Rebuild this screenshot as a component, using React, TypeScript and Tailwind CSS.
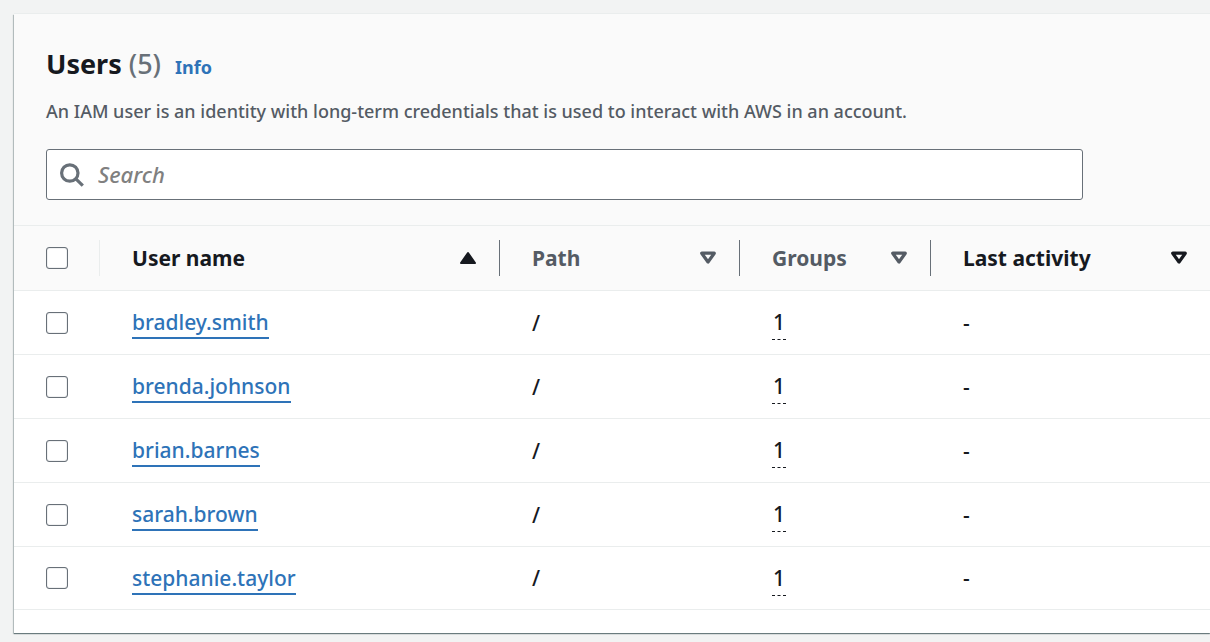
import { useState } from "react";

const users = [
  "bradley.smith",
  "brenda.johnson",
  "brian.barnes",
  "sarah.brown",
  "stephanie.taylor",
];

function SearchIcon() {
  return (
    <svg
      viewBox="0 0 24 24"
      className="size-6 shrink-0 text-[#687078]"
      fill="none"
      stroke="currentColor"
      strokeWidth="3.2"
      aria-hidden="true"
    >
      <circle cx="9.8" cy="10" r="8.2" />
      <path d="M15.6 15.6l7.2 7" />
    </svg>
  );
}

function SortIcon({ ascending = false }: { ascending?: boolean }) {
  return (
    <svg
      viewBox="0 0 18 14"
      className="h-3.5 w-[18px] shrink-0"
      fill={ascending ? "currentColor" : "none"}
      stroke="currentColor"
      strokeWidth={ascending ? 2 : 3.2}
      strokeLinejoin="round"
      aria-hidden="true"
    >
      {ascending ? <path d="M9 2l7 10H2z" /> : <path d="M2.7 2.2h12.6L9 11z" />}
    </svg>
  );
}

function HeaderCell({
  label,
  width,
  tone,
  ascending,
  last,
}: {
  label: string;
  width: string;
  tone: string;
  ascending?: boolean;
  last?: boolean;
}) {
  return (
    <th
      scope="col"
      aria-sort={ascending ? "ascending" : "none"}
      className={`border-y border-[#eaeded] p-0 ${width}`}
    >
      <button
        type="button"
        className={`flex h-9 w-full items-center justify-between pr-[22px] pl-8 text-left font-bold ${tone} ${
          last ? "" : "border-r border-[#687078]"
        }`}
      >
        {label}
        <SortIcon ascending={ascending} />
      </button>
    </th>
  );
}

function Checkbox({
  label,
  checked,
  onChange,
}: {
  label: string;
  checked: boolean;
  onChange: () => void;
}) {
  return (
    <input
      type="checkbox"
      aria-label={label}
      checked={checked}
      onChange={onChange}
      className="block size-[22px] appearance-none rounded-[3px] border border-[#687078] bg-white shadow-[inset_0_0_1px_#687078] checked:bg-[#0073bb]"
    />
  );
}

export default function App() {
  const [selected, setSelected] = useState<string[]>([]);
  const allSelected = selected.length === users.length;
  const toggle = (name: string) =>
    setSelected((current) =>
      current.includes(name) ? current.filter((n) => n !== name) : [...current, name],
    );

  return (
    <main className="min-h-screen bg-[#f2f3f3] pt-3.5 pb-2 pl-3.5 font-['Noto_Sans',sans-serif] font-medium text-[#16191f]">
      <section className="bg-white pb-[23px] shadow-[0_-1px_0_#eaeded,0_1px_1px_rgba(0,28,36,0.45),-1px_1px_1px_rgba(0,28,36,0.2)]">
        <header className="bg-[#fafafa] px-8 pt-8 pb-[25px]">
          <div className="flex items-baseline">
            <h1 className="text-[27px] leading-9 font-bold">
              Users <span className="font-medium text-[#687078]">(5)</span>
            </h1>
            <a href="#info" className="ml-3.5 text-[18px] font-bold text-[#2e73b8]">
              Info
            </a>
          </div>
          <p className="mt-[15px] text-[18px] leading-7 text-[#545b64]">
            An IAM user is an identity with long-term credentials that is used to interact with
            AWS in an account.
          </p>
          <label className="mt-6 mr-[95px] flex h-[51px] items-center gap-3.5 rounded-[3px] border border-[#687078] bg-white px-[13px]">
            <SearchIcon />
            <input
              type="search"
              placeholder="Search"
              aria-label="Search"
              className="min-w-0 flex-1 bg-transparent text-[22px] outline-none placeholder:text-[#808080] placeholder:italic"
            />
          </label>
        </header>
        <table className="w-full table-fixed border-separate border-spacing-0 text-[21px] leading-8">
          <thead className="bg-[#fafafa]">
            <tr className="h-[66px]">
              <th scope="col" className="w-[86px] border-y border-[#eaeded] p-0">
                <div className="flex h-9 items-center border-r border-[#eaeded] pl-8">
                  <Checkbox
                    label="Select all users"
                    checked={allSelected}
                    onChange={() => setSelected(allSelected ? [] : users)}
                  />
                </div>
              </th>
              <HeaderCell label="User name" width="w-[400px]" tone="text-[#16191f]" ascending />
              <HeaderCell label="Path" width="w-[240px]" tone="text-[#545b64]" />
              <HeaderCell label="Groups" width="w-[191px]" tone="text-[#545b64]" />
              <HeaderCell label="Last activity" width="" tone="text-[#16191f]" last />
            </tr>
          </thead>
          <tbody className="[&_td]:border-b [&_td]:border-[#eaeded] [&_td]:py-0 [&_td]:pr-0 [&_td]:pl-8">
            {users.map((name) => (
              <tr key={name} className="h-16 last:h-[63px]">
                <td>
                  <Checkbox
                    label={`Select ${name}`}
                    checked={selected.includes(name)}
                    onChange={() => toggle(name)}
                  />
                </td>
                <td>
                  <a
                    href={`#${name}`}
                    className="inline-block border-b-2 border-[#2e73b8] leading-[30px] text-[#2e73b8]"
                  >
                    {name}
                  </a>
                </td>
                <td>/</td>
                <td>
                  <span className="inline-block border-b border-dashed border-[#16191f] px-px leading-[34px]">
                    1
                  </span>
                </td>
                <td>-</td>
              </tr>
            ))}
          </tbody>
        </table>
      </section>
    </main>
  );
}
